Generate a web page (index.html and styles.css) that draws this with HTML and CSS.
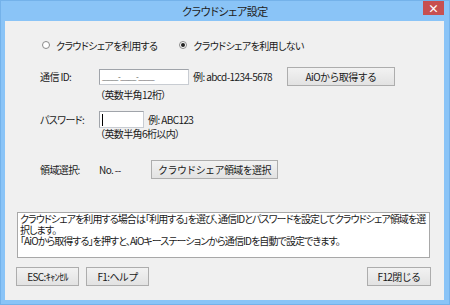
FILE: index.html
```html
<!DOCTYPE html>
<html lang="ja">

<head>
    <meta charset="UTF-8">
    <title>クラウドシェア設定</title>
    <link rel="stylesheet" href="styles.css">
</head>

<body>
    <div class="window">
        <!-- Title bar -->
        <div class="titlebar">
            <span></span>
            <span class="title">クラウドシェア設定</span>
            <span class="close">×</span>
        </div>

        <div class="client">
            <!-- Use / don't use -->
            <div class="radios">
                <label class="radio"><span class="dot"></span>クラウドシェアを利用する</label>
                <label class="radio checked"><span class="dot"></span>クラウドシェアを利用しない</label>
            </div>

            <!-- Communication ID -->
            <div class="row row-id">
                <span class="label">通信 ID:</span>
                <span class="input input-id">____-____-____</span>
                <span class="example">例: abcd-1234-5678</span>
                <button class="btn btn-aio">AiOから取得する</button>
            </div>
            <div class="note note-id">（英数半角12桁）</div>

            <!-- Password -->
            <div class="row row-pw">
                <span class="label">パスワード:</span>
                <span class="input input-pw"><span class="caret"></span></span>
                <span class="example">例: ABC123</span>
            </div>
            <div class="note note-pw">（英数半角6桁以内）</div>

            <!-- Region -->
            <div class="row row-region">
                <span class="label">領域選択:</span>
                <span class="region-no">No. --</span>
                <button class="btn btn-region">クラウドシェア領域を選択</button>
            </div>

            <!-- Help text -->
            <div class="message">
                クラウドシェアを利用する場合は「利用する」を選び、通信IDとパスワードを設定してクラウドシェア領域を選択します。<br>
                「AiOから取得する」を押すと、AiOキーステーションから通信IDを自動で設定できます。
            </div>

            <!-- Footer buttons -->
            <div class="footer">
                <button class="btn btn-foot">ESC:ｷｬﾝｾﾙ</button>
                <button class="btn btn-foot">F1:ヘルプ</button>
                <span class="spacer"></span>
                <button class="btn btn-foot">F12閉じる</button>
            </div>
        </div>
    </div>
</body>

</html>
```

FILE: styles.css
```css
/* General */
body {
    margin: 0;
    font-family: "Noto Sans CJK JP", sans-serif;
    font-size: 10px;
    letter-spacing: -0.6px;
    font-feature-settings: "palt";
    color: #1a1a1a;
}

/* Window frame */
.window {
    width: 450px;
    height: 305px;
    box-sizing: border-box;
    background-color: #8ac4f7;
    border: 1px solid #74b2ea;
    display: flex;
    flex-direction: column;
}

.titlebar {
    height: 20px;
    display: grid;
    grid-template-columns: 1fr auto 1fr;
    align-items: start;
}

.title {
    font-size: 11px;
    letter-spacing: -0.4px;
    line-height: 21px;
    color: #222;
}

.close {
    justify-self: end;
    width: 21px;
    height: 14px;
    margin-right: 5px;
    background-color: #c75050;
    color: #fff;
    font-size: 11px;
    line-height: 14px;
    text-align: center;
    font-weight: bold;
    letter-spacing: 0;
}

/* Client area */
.client {
    margin: 0 5px 4px 4px;
    flex: 1;
    background-color: #f0f0f0;
    display: flex;
    flex-direction: column;
}

.radios {
    display: flex;
    margin-top: 16px;
    height: 16px;
    align-items: center;
    padding-left: 37px;
}

.radio {
    display: flex;
    align-items: center;
    white-space: nowrap;
    margin-right: 22px;
}

.dot {
    width: 6px;
    height: 6px;
    border: 1px solid #8a8a8a;
    border-radius: 50%;
    background-color: #fff;
    margin-right: 6px;
    position: relative;
}

.radio.checked .dot::after {
    content: "";
    position: absolute;
    left: 1px;
    top: 1px;
    width: 4px;
    height: 4px;
    border-radius: 50%;
    background-color: #222;
}

/* Form rows */
.row {
    display: flex;
    align-items: center;
    padding-left: 35px;
}

.label {
    width: 59px;
    white-space: nowrap;
}

.input {
    box-sizing: border-box;
    background-color: #fff;
    border: 1px solid #c8ccd2;
    border-top-color: #a0a4aa;
    border-left-color: #a0a4aa;
}

.input-id {
    width: 90px;
    height: 16px;
    font-size: 8px;
    line-height: 14px;
    padding-left: 2px;
    color: #555;
    letter-spacing: -0.5px;
}

.input-pw {
    width: 45px;
    height: 17px;
    padding: 2px 0 0 2px;
}

.caret {
    display: block;
    width: 1px;
    height: 12px;
    background-color: #000;
}

.example {
    margin-left: 4px;
    white-space: nowrap;
}

.row-id {
    margin-top: 14px;
    height: 19px;
}

.btn-aio {
    margin-left: 15px;
    width: 108px;
}

.note {
    padding-left: 95px;
    line-height: 12px;
}

.note-id {
    margin-top: 3px;
}

.row-pw {
    margin-top: 10px;
    height: 17px;
}

.row-region {
    margin-top: 20px;
    height: 18px;
}

.region-no {
    width: 52px;
}

.btn-region {
    width: 127px;
}

/* Buttons */
.btn {
    height: 19px;
    padding: 0;
    font-family: inherit;
    font-size: 10px;
    letter-spacing: -0.6px;
    white-space: nowrap;
    color: #1a1a1a;
    border: 1px solid #adadad;
    background: linear-gradient(#f2f2f2, #e2e2e2);
}

/* Message box */
.message {
    margin: 34px 0 0 12px;
    width: 413px;
    height: 46px;
    box-sizing: border-box;
    background-color: #fff;
    border: 1px solid #a8a8a8;
    padding: 0 0 0 2px;
    line-height: 11px;
    letter-spacing: -0.9px;
}

/* Footer */
.footer {
    display: flex;
    margin-top: 9px;
    padding: 0 13px 0 11px;
}

.btn-foot {
    width: 63px;
    margin-right: 7px;
}

.spacer {
    flex: 1;
}

.footer .btn-foot:last-child {
    margin-right: 0;
    width: 64px;
}
```
